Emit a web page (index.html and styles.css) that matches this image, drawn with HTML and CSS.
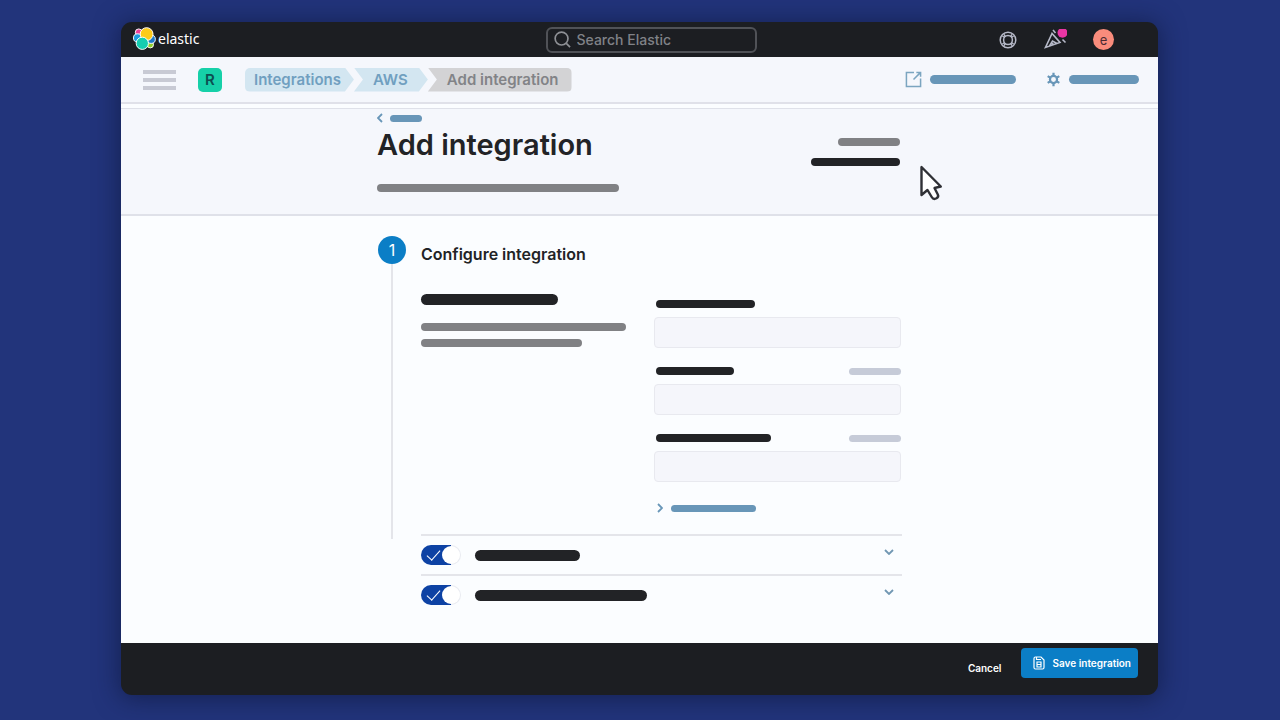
FILE: index.html
```html
<!DOCTYPE html>
<html lang="en">
<head>
<meta charset="utf-8">
<title>Add integration</title>
<link rel="stylesheet" href="styles.css">
</head>
<body>
<div class="window">
  <header class="topbar">
    <a class="logo" href="#">
      <svg class="logo-mark" viewBox="0 0 24 24" aria-hidden="true">
        <circle cx="6" cy="5.6" r="3.6" fill="#ea3f9a" stroke="#fff"/>
        <circle cx="18" cy="18.4" r="3.4" fill="#8fd02c" stroke="#fff"/>
        <circle cx="4.8" cy="11.4" r="4.3" fill="#1b9be0" stroke="#fff"/>
        <circle cx="19" cy="12.8" r="4.3" fill="#1878c8" stroke="#fff"/>
        <circle cx="14.2" cy="7.4" r="6.7" fill="#fccb1a" stroke="#fff"/>
        <circle cx="9.7" cy="17" r="6.4" fill="#14cdb1" stroke="#fff"/>
      </svg>
      <span>elastic</span>
    </a>
    <label class="search">
      <svg viewBox="0 0 18 18" aria-hidden="true"><circle cx="8" cy="8" r="6.8"/><path d="M13 13l4 4"/></svg>
      <input type="text" placeholder="Search Elastic" aria-label="Search Elastic">
    </label>
    <div class="top-actions">
      <button class="icon-button" type="button" aria-label="Help">
        <svg class="help" viewBox="0 0 18 18"><circle cx="9" cy="9" r="7.8"/><circle cx="9" cy="9" r="4.4"/><path d="M3.400 5l2.200 1.500M5 3.400l1.500 2.200M14.600 5l-2.200 1.500M13 3.400l-1.500 2.200M3.400 13l2.200-1.500M5 14.600l1.500-2.200M14.600 13l-2.200-1.500M13 14.600l-1.500-2.200"/></svg>
      </button>
      <button class="icon-button" type="button" aria-label="News">
        <svg class="news" viewBox="0 0 24 22"><path d="M9 4.500L2.500 18.500L17 13.500zM6.500 17l3-5l4.500 2.500M9 15.800l1.200-1.600M10 1l2.500 3M19.500 10.500l3 3"/><circle cx="19.500" cy="3.800" r="5"/></svg>
      </button>
      <button class="avatar" type="button">e</button>
    </div>
  </header>

  <div class="workspace">
    <nav class="navbar">
      <button class="menu" type="button" aria-label="Menu"><span></span><span></span><span></span></button>
      <span class="space">R</span>
      <ol class="crumbs">
        <li class="crumb crumb-first"><a href="#">Integrations</a></li>
        <li class="crumb crumb-middle"><a href="#">AWS</a></li>
        <li class="crumb crumb-last">Add integration</li>
      </ol>
      <div class="nav-links">
        <a class="nav-link" href="#" aria-label="Open">
          <svg viewBox="0 0 18 18"><path d="M9.500 1.500H1.500v15h15V8M9 9L16 2M12 1.700H16.500V6.200"/></svg>
          <span class="bar blue bar-open"></span>
        </a>
        <a class="nav-link" href="#" aria-label="Settings">
          <svg class="gear" viewBox="0 0 16 16"><circle cx="8" cy="8" r="3.800"/><path d="M8 4.200V.8M8 11.800v3.400M4.700 6.100L1.800 4.400M11.300 6.100l2.900-1.700M4.700 9.900l-2.900 1.700M11.300 9.900l2.900 1.700"/></svg>
          <span class="bar blue bar-settings"></span>
        </a>
      </div>
    </nav>

    <section class="page-head">
      <div class="column head-grid">
        <div class="head-main">
          <a class="back" href="#" aria-label="Back">
            <svg viewBox="0 0 6 10"><path d="M5 1L1 5l4 4"/></svg>
            <span class="bar thin blue bar-back"></span>
          </a>
          <h1>Add integration</h1>
          <span class="bar grey bar-intro"></span>
        </div>
        <div class="head-side">
          <span class="bar grey bar-meta"></span>
          <span class="bar dark bar-value"></span>
        </div>
      </div>
    </section>

    <main class="content">
      <div class="column step">
        <div class="rail"><span class="step-number">1</span></div>
        <div class="step-body">
          <h2>Configure integration</h2>
          <form class="settings">
            <div class="summary">
              <span class="bar thick dark bar-name"></span>
              <span class="bar grey bar-line-long"></span>
              <span class="bar grey bar-line-short"></span>
            </div>
            <div class="fields">
              <div class="field">
                <label for="f1" aria-label="Name"><span class="bar dark bar-label-1"></span></label>
                <input id="f1" type="text">
              </div>
              <div class="field">
                <label for="f2" aria-label="Description"><span class="bar dark bar-label-2"></span><span class="bar thin light bar-optional"></span></label>
                <input id="f2" type="text">
              </div>
              <div class="field">
                <label for="f3" aria-label="Namespace"><span class="bar dark bar-label-3"></span><span class="bar thin light bar-optional"></span></label>
                <input id="f3" type="text">
              </div>
              <button class="advanced" type="button" aria-label="Advanced options">
                <svg viewBox="0 0 6 10"><path d="M1 1l4 4l-4 4"/></svg>
                <span class="bar thin blue bar-advanced"></span>
              </button>
            </div>
          </form>
          <div class="toggles">
            <div class="toggle-row">
              <label><input class="switch" type="checkbox" checked aria-label="Collect logs"><span class="bar thick dark bar-logs"></span></label>
              <button class="expand" type="button" aria-label="Expand"><svg viewBox="0 0 10 6"><path d="M1 1l4 4l4-4"/></svg></button>
            </div>
            <div class="toggle-row">
              <label><input class="switch" type="checkbox" checked aria-label="Collect metrics"><span class="bar thick dark bar-metrics"></span></label>
              <button class="expand" type="button" aria-label="Expand"><svg viewBox="0 0 10 6"><path d="M1 1l4 4l4-4"/></svg></button>
            </div>
          </div>
        </div>
      </div>
    </main>
  </div>

  <footer class="footer">
    <button class="cancel" type="button">Cancel</button>
    <button class="save" type="button">
      <svg viewBox="0 0 12 14"><path d="M1 2.500Q1 1 2.500 1H8l3 3v7.500Q11 13 9.500 13h-7Q1 13 1 11.500zM3.500 1v2.500H8M4 6h4v5H4zM4 8.500h4"/></svg>
      <span>Save integration</span>
    </button>
  </footer>
</div>
<svg class="cursor" viewBox="0 0 24 38" aria-hidden="true"><path d="M2.500 3V31L8.500 26l4.200 7Q14.500 36 17.500 34.300Q20 32.800 18.800 30.500L15.500 24L21.800 22.500z"/></svg>
</body>
</html>
```

FILE: styles.css
```css
* {
  box-sizing: border-box;
}

body {
  margin: 0;
  min-height: 100vh;
  padding: 22px 122px 25px 121px;
  display: flex;
  background: #22347b;
  font-family: Inter, "Liberation Sans", sans-serif;
  color: #222326;
}

button {
  border: 0;
  padding: 0;
  background: none;
  font: inherit;
  color: inherit;
}

a {
  color: inherit;
  text-decoration: none;
}

svg {
  display: block;
  flex: none;
  fill: none;
  stroke: currentColor;
}

.window {
  flex: 1;
  display: flex;
  flex-direction: column;
  border-radius: 11px;
  overflow: hidden;
  background: #1c1e22;
  box-shadow: 0 2px 24px 2px rgba(16, 26, 66, 0.7);
}

.workspace {
  flex: 1;
  background: #fbfdff;
}

/* Placeholder bars standing in for text */
.bar {
  display: block;
  height: 8px;
  border-radius: 6px;
}

.thin { height: 7px; }
.thick { height: 11px; }
.dark { background: #222326; }
.grey { background: #808184; }
.blue { background: #6896b8; }
.light { background: #c6cbd8; }

.bar-open { width: 86px; height: 9px; }
.bar-settings { width: 70px; height: 9px; }
.bar-back { width: 32px; }
.bar-intro { width: 242px; }
.bar-meta { width: 62px; }
.bar-value { width: 89px; }
.bar-name { width: 137px; }
.bar-line-long { width: 205px; }
.bar-line-short { width: 161px; }
.bar-label-1 { width: 99px; }
.bar-label-2 { width: 78px; }
.bar-label-3 { width: 115px; }
.bar-optional { width: 52px; }
.bar-advanced { width: 85px; }
.bar-logs { width: 105px; }
.bar-metrics { width: 172px; }

/* Dark bar */
.topbar {
  display: grid;
  grid-template-columns: 15fr 211px 13fr;
  align-items: center;
  height: 35px;
  padding: 0 44px 0 12px;
}

.logo {
  display: flex;
  align-items: center;
  gap: 2px;
  height: 33px;
  margin-bottom: 2px;
  font: 14px/20px "Noto Sans", sans-serif;
  color: #fff;
}

.logo-mark {
  width: 23px;
  height: 23px;
}

.search {
  display: flex;
  align-items: center;
  gap: 6px;
  height: 26px;
  padding: 0 6px;
  border: 2px solid #505257;
  border-radius: 6px;
  color: #8e9095;
}

.search svg {
  width: 17px;
  height: 17px;
  stroke-width: 1.8;
}

.search input {
  width: 100%;
  min-width: 0;
  padding: 0;
  border: 0;
  outline: 0;
  background: none;
  font: 500 14px/20px Inter, sans-serif;
}

.search input::placeholder {
  color: #808287;
  opacity: 1;
}

.top-actions {
  display: flex;
  align-items: center;
  justify-content: flex-end;
  gap: 26px;
  color: #b6b9c8;
}

.help {
  width: 18px;
  height: 18px;
  stroke-width: 1.5;
}

.news {
  width: 24px;
  height: 22px;
  stroke-width: 1.6;
}

.news circle {
  fill: #e935a4;
  stroke: none;
}

.avatar {
  width: 21px;
  height: 21px;
  border-radius: 50%;
  background: #f98c7c;
  font-size: 13px;
  line-height: 20px;
  color: #4b2b33;
}

/* Breadcrumb bar */
.navbar {
  display: flex;
  align-items: center;
  height: 47px;
  padding: 0 19px 0 22px;
  border-bottom: 2px solid #e0e1e9;
  background: #f5f7fc;
}

.menu {
  display: grid;
  gap: 4px;
  width: 33px;
}

.menu span {
  height: 4px;
  background: #c8cad4;
}

.space {
  width: 24px;
  height: 24px;
  margin: 0 23px 0 22px;
  border-radius: 5px;
  background: #16d0a8;
  font-size: 15px;
  font-weight: 600;
  line-height: 24px;
  text-align: center;
  color: #0c5052;
}

.crumbs {
  display: flex;
  margin: 0;
  padding: 0;
  list-style: none;
  font-size: 15px;
  font-weight: 600;
  line-height: 24px;
  white-space: nowrap;
  color: #709fc0;
}

.crumb {
  height: 24px;
  background: #d3e6f1;
}

.crumb-first {
  padding: 0 13px 0 9px;
  border-radius: 5px 0 0 5px;
  clip-path: polygon(0 0, calc(100% - 9px) 0, 100% 50%, calc(100% - 9px) 100%, 0 100%);
}

.crumb-middle {
  padding: 0 20px 0 19px;
  clip-path: polygon(0 0, calc(100% - 9px) 0, 100% 50%, calc(100% - 9px) 100%, 0 100%, 9px 50%);
}

.crumb-last {
  padding: 0 13px 0 19px;
  border-radius: 0 5px 5px 0;
  background: #d3d3d5;
  color: #828387;
  clip-path: polygon(0 0, 100% 0, 100% 100%, 0 100%, 9px 50%);
}

.nav-links {
  display: flex;
  gap: 30px;
  margin-left: auto;
}

.nav-link {
  display: flex;
  align-items: center;
  gap: 8px;
  color: #7ba5c0;
}

.nav-link svg {
  width: 17px;
  height: 17px;
  stroke-width: 1.6;
}

.nav-link .gear {
  width: 15px;
  height: 15px;
  stroke: #6896b8;
  stroke-width: 2.4;
}

/* Page heading */
.column {
  width: 100%;
  max-width: 525px;
  margin: 0 auto;
}

.page-head {
  margin-top: 4px;
  padding: 5px 20px 22px;
  border-top: 1px solid #dfe1e9;
  border-bottom: 2px solid #dfe1e9;
  background: #f5f7fc;
}

.head-grid {
  display: flex;
  justify-content: space-between;
}

.back {
  display: flex;
  align-items: center;
  gap: 7px;
  height: 8px;
  color: #6896b8;
}

.back svg,
.advanced svg {
  width: 6px;
  height: 10px;
  stroke-width: 1.8;
}

h1 {
  margin: 4px 0 20px;
  font-size: 29px;
  font-weight: 600;
  line-height: 38px;
}

.head-side {
  display: grid;
  gap: 12px;
  align-content: start;
  justify-items: end;
  padding: 24px 2px 0 0;
}

/* Step */
.content {
  padding: 20px 20px 0;
}

.step {
  display: flex;
  gap: 15px;
  padding-left: 1px;
}

.rail {
  display: flex;
  flex-direction: column;
  align-items: center;
  margin-bottom: 75px;
}

.rail::after {
  content: "";
  flex: 1;
  width: 2px;
  background: #e4e5ea;
}

.step-number {
  width: 28px;
  height: 28px;
  border-radius: 50%;
  background: #0b7ec6;
  font-size: 16px;
  line-height: 28px;
  text-align: center;
  color: #fff;
}

.step-body {
  flex: 1;
  min-width: 0;
}

h2 {
  margin: 7px 0 29px;
  font-size: 16px;
  font-weight: 600;
  line-height: 22px;
}

.settings {
  display: flex;
  justify-content: space-between;
  gap: 20px;
  padding: 0 1px 21px 0;
}

.summary {
  display: grid;
  gap: 8px;
  align-content: start;
}

.bar-name {
  margin-bottom: 10px;
}

.fields {
  display: grid;
  gap: 19px;
  width: 247px;
  padding-top: 6px;
}

.field label {
  display: flex;
  align-items: center;
  justify-content: space-between;
  padding: 0 0 9px 2px;
}

.field input {
  display: block;
  width: 100%;
  height: 31px;
  border: 1px solid #e8e9ef;
  border-radius: 4px;
  background: #f5f6fb;
}

.advanced {
  display: flex;
  align-items: center;
  gap: 8px;
  margin-top: 2px;
  padding-left: 3px;
  color: #6896b8;
}

.toggle-row {
  display: flex;
  align-items: center;
  justify-content: space-between;
  height: 40px;
  padding-right: 8px;
  border-top: 2px solid #e4e5ea;
}

.toggle-row label {
  display: flex;
  align-items: center;
  gap: 14px;
}

.switch {
  appearance: none;
  position: relative;
  width: 40px;
  height: 20px;
  margin: 0;
  border-radius: 10px;
  background: linear-gradient(90deg, #0d42a4 75%, #e9ebf1 75%);
}

.switch::before {
  content: "";
  position: absolute;
  top: 1px;
  right: 1px;
  width: 18px;
  height: 18px;
  border-radius: 50%;
  background: #fff;
}

.switch::after {
  content: "";
  position: absolute;
  top: 5px;
  left: 6px;
  width: 12px;
  height: 6px;
  border: solid #fff;
  border-width: 0 0 1px 1px;
  transform: rotate(-48deg);
}

.expand {
  padding-bottom: 7px;
  color: #7197b3;
}

.expand svg {
  width: 10px;
  height: 6px;
  stroke-width: 1.8;
}

/* Footer */
.footer {
  display: flex;
  align-items: flex-end;
  justify-content: flex-end;
  gap: 20px;
  padding: 5px 20px 17px;
  font-size: 10px;
  font-weight: 600;
  color: #fff;
}

.cancel {
  height: 20px;
  line-height: 20px;
}

.save {
  display: flex;
  align-items: center;
  gap: 7px;
  height: 30px;
  padding: 0 7px 0 12px;
  border-radius: 4px;
  background: #0b7ec6;
}

.save svg {
  width: 12px;
  height: 14px;
  stroke-width: 1.2;
}

/* Pointer lying over the page */
.cursor {
  position: absolute;
  top: 164px;
  left: 919px;
  width: 24px;
  height: 38px;
  fill: #fff;
  stroke: #2f3035;
  stroke-width: 2.4;
  stroke-linejoin: round;
}
```
